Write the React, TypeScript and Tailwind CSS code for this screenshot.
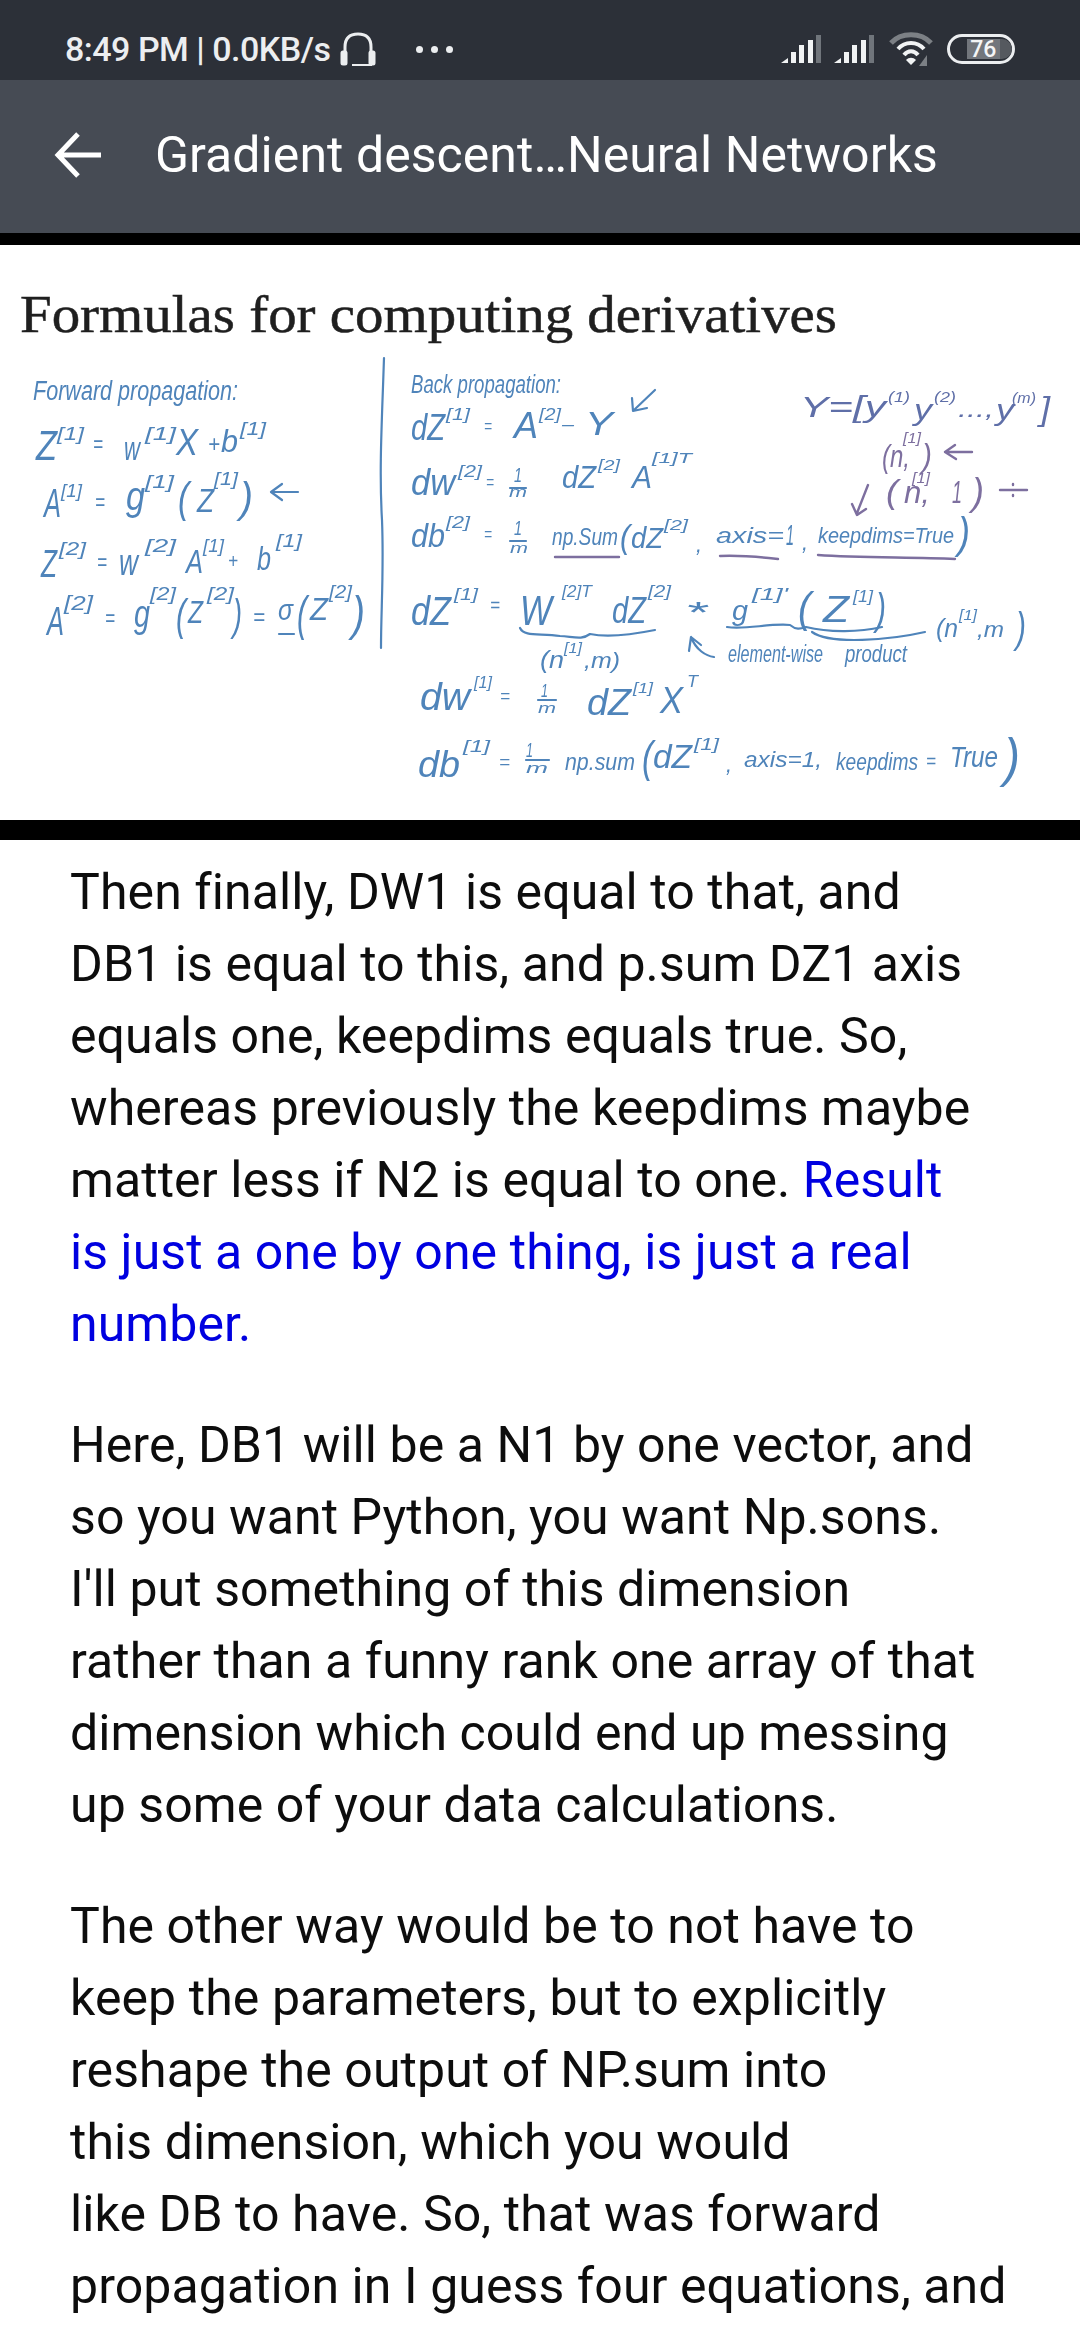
const PARAGRAPHS: { text: string; blue?: boolean }[][] = [
  [
    { text: "Then finally, DW1 is equal to that, and" },
    { text: "DB1 is equal to this, and p.sum DZ1 axis" },
    { text: "equals one, keepdims equals true. So," },
    { text: "whereas previously the keepdims maybe" },
    { text: "matter less if N2 is equal to one. " },
    { text: "is just a one by one thing, is just a real", blue: true },
    { text: "number.", blue: true },
  ],
  [
    { text: "Here, DB1 will be a N1 by one vector, and" },
    { text: "so you want Python, you want Np.sons." },
    { text: "I'll put something of this dimension" },
    { text: "rather than a funny rank one array of that" },
    { text: "dimension which could end up messing" },
    { text: "up some of your data calculations." },
  ],
  [
    { text: "The other way would be to not have to" },
    { text: "keep the parameters, but to explicitly" },
    { text: "reshape the output of NP.sum into" },
    { text: "this dimension, which you would" },
    { text: "like DB to have. So, that was forward" },
    { text: "propagation in I guess four equations, and" },
  ],
];

const BLUE = "#4f84ba";
const PURPLE = "#7d6f9f";
const SLATE = "#5f6fa8";

// x, baseline y, font size, text, width, colour
type Ink = [number, number, number, string, number, string?];

const INK: Ink[] = [
  [33, 400, 27, "Forward  propagation:", 205],
  // Z[1] = w[1]X + b[1]
  [36, 460, 42, "Z", 21],
  [57, 440, 19, "[1]", 27],
  [93, 452, 24, "=", 10],
  [124, 460, 34, "w", 16],
  [145, 440, 19, "[1]", 31],
  [176, 455, 36, "X", 22],
  [208, 452, 24, "+", 12],
  [221, 452, 32, "b", 17],
  [240, 435, 19, "[1]", 26],
  // A[1] = g[1](Z[1])
  [44, 517, 40, "A", 17],
  [61, 497, 19, "[1]", 21],
  [95, 510, 24, "=", 10],
  [126, 510, 40, "g", 19],
  [145, 488, 19, "[1]", 29],
  [178, 512, 42, "(", 11],
  [197, 512, 34, "Z", 17],
  [214, 485, 19, "[1]", 24],
  [240, 512, 42, ")", 13],
  // Z[2] = w[2]A[1] + b[1]
  [41, 577, 38, "Z", 16],
  [59, 555, 19, "[2]", 27],
  [97, 570, 24, "=", 10],
  [119, 575, 36, "w", 19],
  [145, 552, 19, "[2]", 31],
  [186, 573, 34, "A", 17],
  [203, 552, 18, "[1]", 21],
  [228, 568, 20, "+", 10],
  [257, 570, 34, "b", 14],
  [276, 547, 19, "[1]", 26],
  // A[2] = g[2](Z[2]) = sigma(Z[2])
  [47, 635, 40, "A", 17],
  [64, 610, 20, "[2]", 29],
  [105, 626, 24, "=", 10],
  [134, 627, 38, "g", 16],
  [150, 600, 18, "[2]", 26],
  [176, 630, 44, "(", 10],
  [188, 623, 32, "Z", 15],
  [207, 600, 18, "[2]", 27],
  [233, 630, 44, ")", 9],
  [253, 625, 24, "=", 12],
  [278, 620, 30, "σ", 15],
  [297, 630, 48, "(", 10],
  [310, 620, 32, "Z", 18],
  [329, 598, 19, "[2]", 23],
  [352, 630, 48, ")", 13],

  // Back propagation
  [411, 393, 25, "Back propagation:", 150],
  [411, 440, 36, "dZ", 34],
  [446, 420, 17, "[1]", 24],
  [484, 432, 18, "=", 8],
  [514, 438, 36, "A", 24],
  [539, 420, 17, "[2]", 22],
  [562, 430, 18, "–", 12],
  [585, 435, 34, "Y", 28],

  // Y = [y(1) y(2) ..., y(m)]
  [800, 417, 30, "Y=[y", 86, SLATE],
  [888, 402, 15, "(1)", 22, SLATE],
  [914, 420, 30, "y", 18, SLATE],
  [934, 402, 15, "(2)", 22, SLATE],
  [958, 417, 24, "...,", 36, SLATE],
  [996, 420, 30, "y", 18, SLATE],
  [1012, 403, 15, "(m)", 24, SLATE],
  [1040, 420, 34, "]", 10, SLATE],

  // shapes
  [882, 467, 32, "(n,", 28, PURPLE],
  [903, 443, 14, "[1]", 18, PURPLE],
  [922, 467, 34, ")", 10, PURPLE],
  [886, 503, 34, "(", 12, PURPLE],
  [904, 503, 32, "n,", 26, PURPLE],
  [912, 483, 14, "[1]", 18, PURPLE],
  [952, 503, 32, "1", 10, PURPLE],
  [972, 505, 38, ")", 12, PURPLE],

  // dw[2] = 1/m dZ[2] A[1]T
  [411, 495, 36, "dw", 44],
  [458, 477, 17, "[2]", 24],
  [486, 488, 18, "=", 8],
  [514, 482, 20, "1", 8],
  [509, 497, 15, "m", 18],
  [562, 488, 32, "dZ", 34],
  [598, 470, 15, "[2]", 22],
  [632, 488, 32, "A", 20],
  [652, 463, 15, "[1]T", 40],

  // db[2] = 1/m np.sum(dZ[2], axis=1, keepdims=True)
  [411, 547, 34, "db", 34],
  [446, 528, 17, "[2]", 24],
  [484, 540, 18, "=", 8],
  [514, 535, 20, "1", 8],
  [510, 553, 15, "m", 18],
  [552, 545, 23, "np.Sum", 66],
  [620, 548, 34, "(", 10],
  [631, 548, 30, "dZ", 32],
  [664, 530, 15, "[2]", 24],
  [696, 552, 24, ",", 6],
  [716, 543, 22, "axis=", 68],
  [786, 545, 30, "1", 8],
  [802, 550, 24, ",", 6],
  [818, 543, 22, "keepdims=True", 136],
  [958, 548, 44, ")", 12],

  // dZ[1] = W[2]T dZ[2] * g[1]'(Z[1])
  [411, 625, 40, "dZ", 40],
  [454, 600, 17, "[1]", 24],
  [490, 612, 20, "=", 10],
  [520, 625, 42, "W", 32],
  [562, 597, 17, "[2]T", 30],
  [612, 623, 36, "dZ", 34],
  [648, 597, 17, "[2]", 23],
  [685, 622, 30, "*", 22],
  [732, 620, 28, "g", 16],
  [752, 600, 17, "[1]'", 36],
  [798, 622, 42, "(", 13],
  [823, 622, 36, "Z", 26],
  [853, 602, 17, "[1]", 20],
  [876, 624, 44, ")", 10],
  [936, 637, 26, "(n", 22],
  [959, 620, 14, "[1]", 18],
  [977, 637, 22, ",m", 27],
  [1016, 642, 42, ")", 10],
  [540, 668, 24, "(n", 24],
  [564, 653, 14, "[1]", 18],
  [584, 668, 22, ",m)", 36],
  [728, 662, 23, "element-wise", 95],
  [845, 662, 23, "product", 62],

  // dw[1] = 1/m dZ[1] X^T
  [420, 710, 38, "dw", 50],
  [474, 688, 17, "[1]", 18],
  [500, 702, 18, "=", 10],
  [541, 697, 18, "1", 7],
  [538, 713, 14, "m", 18],
  [587, 715, 36, "dZ", 44],
  [633, 693, 15, "[1]", 20],
  [660, 713, 36, "X", 23],
  [687, 687, 17, "T", 11],

  // db[1] = 1/m np.sum(dZ[1], axis=1, keepdims=True)
  [418, 777, 36, "db", 42],
  [463, 752, 17, "[1]", 27],
  [499, 768, 18, "=", 11],
  [526, 757, 20, "1", 7],
  [526, 773, 14, "m", 22],
  [565, 770, 23, "np.sum", 70],
  [642, 772, 44, "(", 11],
  [653, 768, 34, "dZ", 39],
  [694, 750, 17, "[1]", 25],
  [726, 772, 24, ",", 6],
  [744, 767, 22, "axis=1,", 78],
  [836, 770, 24, "keepdims", 82],
  [926, 768, 20, "=", 10],
  [950, 767, 30, "True", 48],
  [1004, 776, 54, ")", 16],
];

function Slide() {
  return (
    <svg viewBox="0 245 1080 575" className="block h-[575px] w-[1080px] bg-white">
      <text
        x="20"
        y="332"
        fontSize="52"
        fill="#1f1f1f"
        stroke="#1f1f1f"
        strokeWidth="0.5"
        textLength="817"
        lengthAdjust="spacingAndGlyphs"
        fontFamily="'Liberation Serif', serif"
      >
        Formulas for computing derivatives
      </text>
      <g style={{ filter: "blur(0.5px)" }}>
        <g fontFamily="'Liberation Sans', sans-serif" fontStyle="italic">
          {INK.map(([x, y, size, text, width, color], i) => (
            <text key={i} x={x} y={y} fontSize={size} fill={color ?? BLUE} textLength={width} lengthAdjust="spacingAndGlyphs">
              {text}
            </text>
          ))}
        </g>
        <g fill="none" stroke={BLUE} strokeWidth="2.2" strokeLinecap="round" strokeLinejoin="round">
          <path d="M384 358 C382 420 379 470 382 520 C384 570 381 610 381 648" />
          <path d="M298 492 H272 M282 484 L271 492 L282 500" />
          <path d="M279 634 H294" />
          <path d="M655 390 L634 410 M632 398 L633 411 L647 408" />
          <path d="M510 488 H526 M510 541 H526 M538 700 H556 M526 760 H549" />
          <path d="M520 628 C524 637 540 633 560 636 C575 637 582 640 590 634 C605 637 630 635 655 630" />
          <path d="M727 627 C745 630 770 623 790 625 C796 630 800 629 806 627 C830 633 860 632 882 627" />
          <path d="M812 632 C830 645 890 640 925 632" />
          <path d="M689 651 L691 637 L701 645 M691 637 C696 650 706 656 714 657" />
        </g>
        <g fill="none" stroke={PURPLE} strokeWidth="2.4" strokeLinecap="round" strokeLinejoin="round">
          <path d="M555 557 H619 M720 556 C740 555 760 557 778 559 M818 555 C860 558 910 557 955 559" />
          <path d="M972 452 H945 M955 445 L945 452 L956 459" />
          <path d="M868 485 L857 513 M852 504 L857 515 L866 509" />
          <path d="M1000 490 H1027 M1013 484 V485 M1013 495 V496" />
        </g>
      </g>
    </svg>
  );
}

function Signal() {
  return (
    <svg width="40" height="28" viewBox="0 0 40 28" fill="#f1f3f4">
      <path d="M0 28 L7 23 V28 Z" />
      <rect x="10" y="17" width="5" height="11" />
      <rect x="18" y="10" width="5" height="18" />
      <rect x="27" y="5" width="5" height="23" />
      <rect x="35" y="0" width="5" height="28" fill="#70757b" />
    </svg>
  );
}

function StatusBar() {
  return (
    <div className="flex h-[80px] items-center bg-[#2c3038] px-[65px] pt-[18px] font-['Roboto',sans-serif] text-[#eceef0]">
      <span className="w-[267px] whitespace-nowrap text-[34px] font-medium leading-none tracking-[-0.5px]">8:49 PM | 0.0KB/s</span>
      <svg width="36" height="36" viewBox="0 0 36 36" fill="none" stroke="#eceef0" strokeWidth="3" className="ml-[8px]">
        <path d="M5 27 V16 C5 7 10 3 18 3 C26 3 31 7 31 16 V27" />
        <rect x="2" y="21" width="4" height="12" fill="#eceef0" rx="1" />
        <rect x="30" y="21" width="4" height="12" fill="#eceef0" rx="1" />
        <path d="M12 34 H32" strokeWidth="2" />
      </svg>
      <div className="ml-[40px] flex gap-[8px]">
        <span className="h-[7px] w-[7px] rounded-full bg-[#eceef0]" />
        <span className="h-[7px] w-[7px] rounded-full bg-[#eceef0]" />
        <span className="h-[7px] w-[7px] rounded-full bg-[#eceef0]" />
      </div>
      <div className="ml-auto flex items-center">
        <Signal />
        <div className="ml-[13px]">
          <Signal />
        </div>
        <svg width="44" height="36" viewBox="0 0 44 36" fill="none" className="ml-[15px]">
          <path d="M2 12 C12 1 32 1 42 12" stroke="#7c8085" strokeWidth="5" />
          <path d="M9 18 C16 10 28 10 35 18" stroke="#f1f3f4" strokeWidth="4" />
          <path d="M15 24 C19 19 25 19 29 24" stroke="#f1f3f4" strokeWidth="4" />
          <path d="M17 29 C20 26 24 26 27 29 L22 34 Z" fill="#f1f3f4" />
          <path d="M38 24 V35 H30 Z" fill="#7c8085" />
        </svg>
        <div className="ml-[14px] flex h-[30px] w-[68px] items-center overflow-hidden rounded-full border-[3px] border-[#eceef0] pl-[17px]">
          <span className="flex h-[20px] w-[34px] items-center justify-center bg-[#72767c] text-[23px] font-medium leading-none text-[#f4f5f6]">
            76
          </span>
          <span className="h-[20px] w-[13px] rounded-r-full bg-[#55595f]" />
        </div>
      </div>
    </div>
  );
}

function AppBar() {
  return (
    <div className="flex h-[153px] items-center bg-[#464b54] pb-[3px] pl-[54px] font-['Roboto',sans-serif] text-white">
      <svg width="48" height="48" viewBox="0 0 48 48" fill="none" stroke="white" strokeWidth="5">
        <path d="M47 24 H4 M24 3 L4 24 L24 45" />
      </svg>
      <span className="ml-[53px] text-[50px] leading-none tracking-[0.05px]">Gradient descent…Neural Networks</span>
    </div>
  );
}

export default function App() {
  return (
    <div className="h-[2340px] w-[1080px] overflow-hidden bg-white">
      <StatusBar />
      <AppBar />
      <div className="h-[12px] bg-black" />
      <Slide />
      <div className="h-[20px] bg-black" />
      <div className="pl-[70px] pt-[16px] font-['Roboto',sans-serif] text-[50px] leading-[72px] tracking-[0.08px] text-[#0d0d0d]">
        {PARAGRAPHS.map((lines, p) => (
          <div key={p} className="mb-[49px] whitespace-pre">
            {lines.map((line, i) =>
              p === 0 && i === 4 ? (
                <div key={i}>
                  {line.text}
                  <span className="text-[#0000e0]">Result</span>
                </div>
              ) : (
                <div key={i} className={line.blue ? "text-[#0000e0]" : undefined}>
                  {line.text}
                </div>
              ),
            )}
          </div>
        ))}
      </div>
    </div>
  );
}
